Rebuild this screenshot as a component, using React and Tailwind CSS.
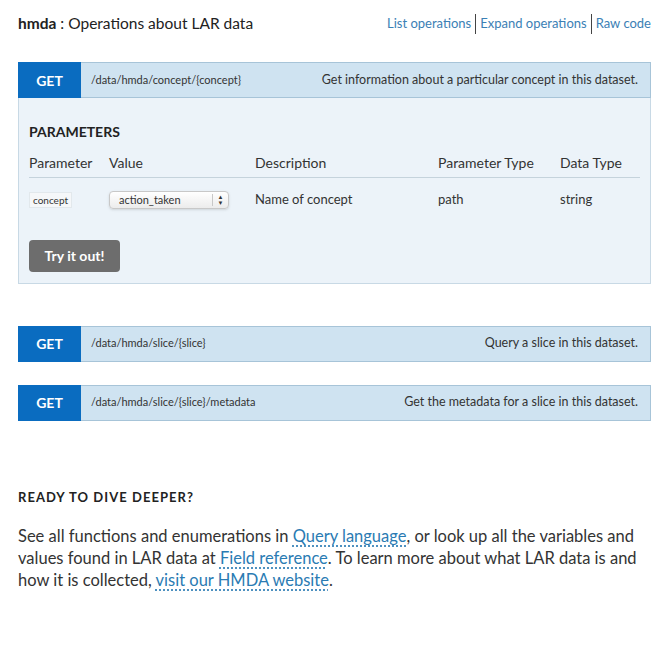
const FONT = { fontFamily: "Lato, 'Open Sans', sans-serif" };

function GetBar({ path, summary }) {
  return (
    <div className="flex h-[36px] border border-[#a7c4d8] bg-[#cfe3f1]">
      <div className="flex w-[63px] shrink-0 items-center justify-center bg-[#0a6cc0] -ml-px -my-px h-[36px] text-[14px] font-bold text-white">
        GET
      </div>
      <div className="flex flex-1 items-center justify-between pl-[10px] pr-[12px]">
        <span className="text-[11px] text-[#333]">{path}</span>
        <span className="text-[12.5px] text-[#333]">{summary}</span>
      </div>
    </div>
  );
}

function Link({ children }) {
  return (
    <a
      className="text-[#2a7bb3] underline decoration-dotted decoration-[#2a7bb3] underline-offset-[4px]"
      href="#"
    >
      {children}
    </a>
  );
}

export default function App() {
  return (
    <div className="bg-white text-[#222] px-[18px] pt-[13px] pb-[60px]" style={FONT}>
      <div className="flex items-center justify-between h-[22px]">
        <h2 className="text-[15.5px] text-[#222]">
          <span className="font-bold">hmda</span> : Operations about LAR data
        </h2>
        <div className="flex items-center text-[13px] text-[#3b80b5] mr-[-8px]">
          <span className="pr-[4px]">List operations</span>
          <span className="border-l border-[#444] h-[20px]" />
          <span className="px-[4px]">Expand operations</span>
          <span className="border-l border-[#444] h-[20px]" />
          <span className="pl-[4px]">Raw code</span>
        </div>
      </div>

      <div className="mt-[27px] mr-[-8px]">
        <GetBar
          path="/data/hmda/concept/{concept}"
          summary="Get information about a particular concept in this dataset."
        />
        <div className="border border-t-0 border-[#c8d9e5] bg-[#ecf3f9] px-[10px] pt-[23px] pb-[11px]">
          <h4 className="text-[14px] font-bold text-[#222]">PARAMETERS</h4>
          <table className="mt-[10px] w-[611px] text-[14px] text-[#333] border-collapse">
            <thead>
              <tr className="border-b border-[#c5d3dc] text-left">
                <th className="w-[80px] font-normal pb-[4px]">Parameter</th>
                <th className="w-[146px] font-normal pb-[4px]">Value</th>
                <th className="w-[183px] font-normal pb-[4px]">Description</th>
                <th className="w-[122px] font-normal pb-[4px]">Parameter Type</th>
                <th className="font-normal pb-[4px]">Data Type</th>
              </tr>
            </thead>
            <tbody>
              <tr className="text-[13px]">
                <td className="pt-[12px]">
                  <span className="inline-block bg-[#f5f7f9] border border-[#e2e8ec] px-[3px] text-[10px] leading-[14px] text-[#333]">
                    concept
                  </span>
                </td>
                <td className="pt-[12px]">
                  <div className="flex h-[18px] w-[120px] items-center rounded-[4px] border border-[#c8c8c8] bg-gradient-to-b from-white to-[#ececec] text-[11px] shadow-sm">
                    <span className="flex-1 pl-[9px]">action_taken</span>
                    <span className="flex h-[12px] w-[16px] flex-col items-center justify-center border-l border-[#c8c8c8] text-[6px] leading-[6px] text-[#333]">
                      <span>▲</span>
                      <span>▼</span>
                    </span>
                  </div>
                </td>
                <td className="pt-[12px]">Name of concept</td>
                <td className="pt-[12px]">path</td>
                <td className="pt-[12px]">string</td>
              </tr>
            </tbody>
          </table>
          <button className="mt-[30px] h-[32px] w-[91px] rounded-[4px] bg-[#6d6d6d] text-[14px] font-bold text-white">
            Try it out!
          </button>
        </div>
      </div>

      <div className="mt-[42px] mr-[-8px]">
        <GetBar path="/data/hmda/slice/{slice}" summary="Query a slice in this dataset." />
      </div>
      <div className="mt-[23px] mr-[-8px]">
        <GetBar
          path="/data/hmda/slice/{slice}/metadata"
          summary="Get the metadata for a slice in this dataset."
        />
      </div>

      <h3 className="mt-[67px] text-[13px] font-bold tracking-[0.08em] text-[#222]">
        READY TO DIVE DEEPER?
      </h3>
      <p className="mt-[18px] text-[16.5px] leading-[22px] text-[#333] w-[635px]">
        See all functions and enumerations in <Link>Query language</Link>, or look up all the
        variables and values found in LAR data at <Link>Field reference</Link>. To learn more
        about what LAR data is and how it is collected, <Link>visit our HMDA website</Link>.
      </p>
    </div>
  );
}
